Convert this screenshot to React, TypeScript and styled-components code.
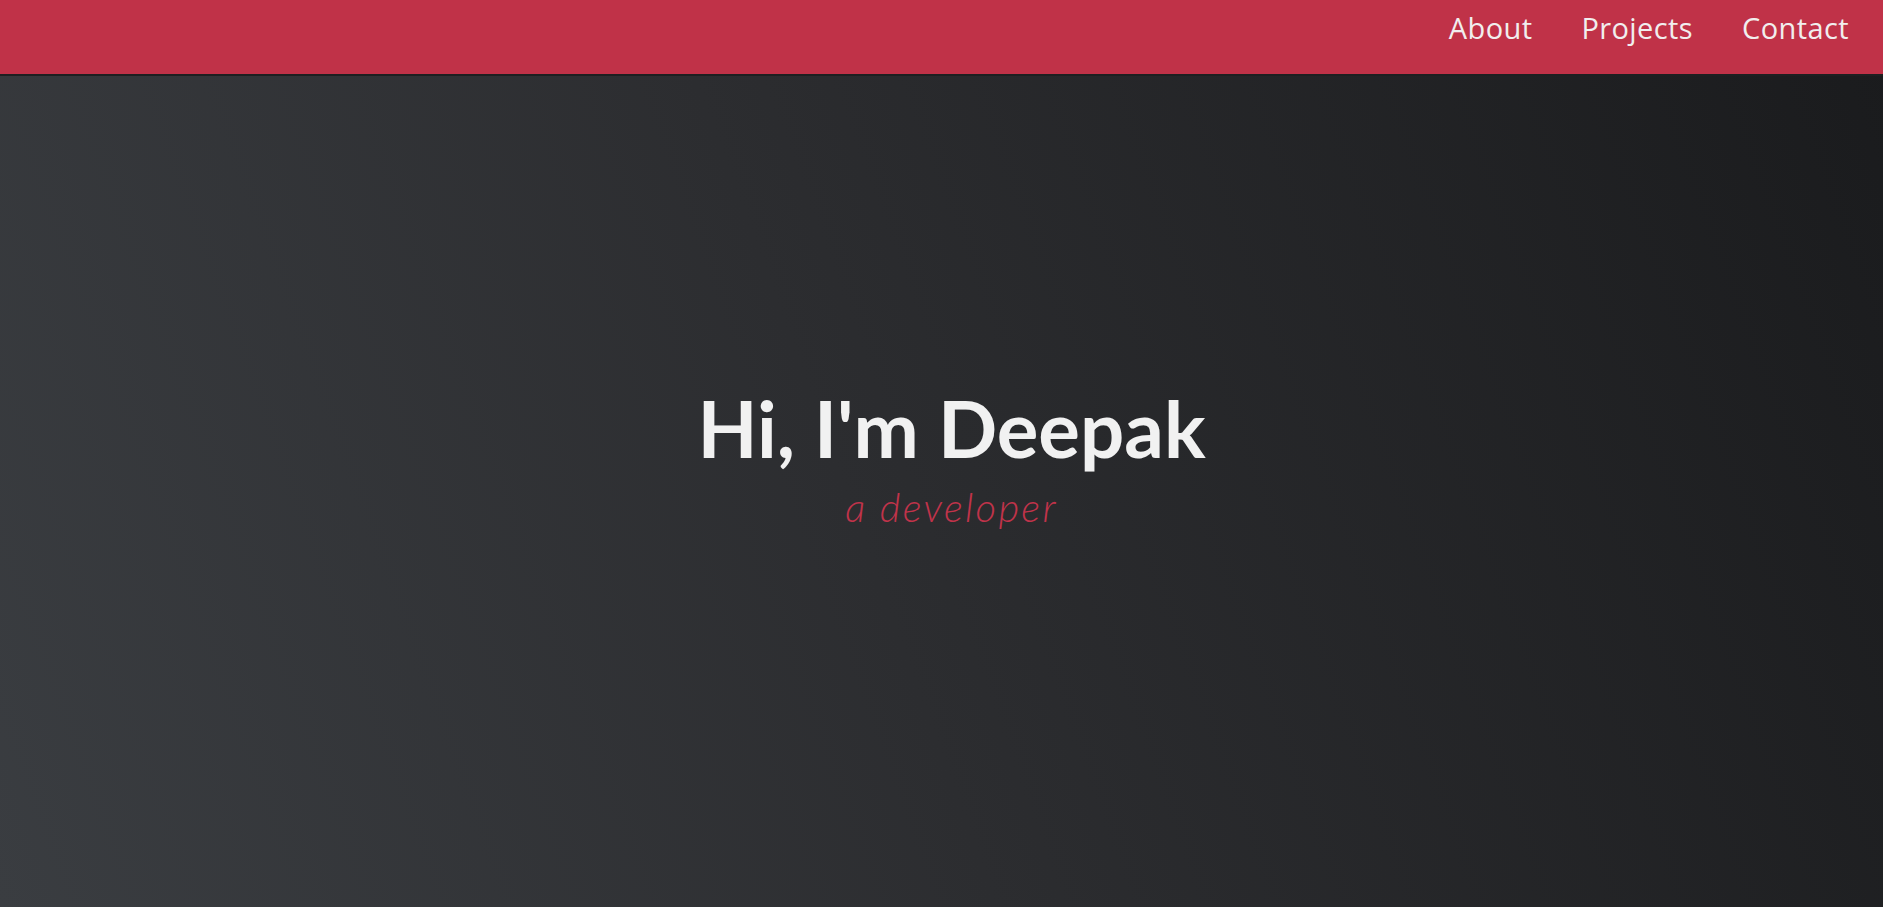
import React from 'react';
import styled, {createGlobalStyle} from 'styled-components';

const GlobalStyle = createGlobalStyle`
  html, body {
    margin: 0;
    padding: 0;
    height: 100%;
  }
  body {
    font-family: Lato, 'Open Sans', sans-serif;
    background: #1b1c1e;
    overflow: hidden;
  }
  #root {
    height: 100%;
  }
`;

const Page = styled.div`
  position: relative;
  height: 100vh;
  display: flex;
  flex-direction: column;
`;

const Header = styled.header`
  position: absolute;
  top: 0;
  left: 0;
  right: 0;
  height: 74px;
  background: #c03248;
  border-bottom: 2px solid #1e1f21;
  display: flex;
  justify-content: flex-end;
  align-items: flex-start;
  padding: 0 34px 0 0;
  z-index: 2;
`;

const Nav = styled.nav`
  display: flex;
  gap: 49px;
  padding-top: 10px;
`;

const NavLink = styled.a`
  font-family: 'Open Sans', Lato, sans-serif;
  font-size: 29px;
  letter-spacing: 0.4px;
  color: #f1eeee;
  text-decoration: none;
  line-height: 36px;
`;

const Hero = styled.section`
  flex: 1;
  display: flex;
  flex-direction: column;
  align-items: center;
  justify-content: center;
  background: linear-gradient(70deg, #3a3d41 0%, #2c2d30 45%, #1a1b1d 100%);
  padding: 10px 0 0 20px;
`;

const Title = styled.h1`
  font-family: Lato, 'Open Sans', sans-serif;
  font-weight: 700;
  font-size: 78px;
  line-height: 1.1;
  color: #f1f1f1;
  margin: 0;
`;

const Subtitle = styled.p`
  font-family: Lato, 'Open Sans', sans-serif;
  font-weight: 300;
  font-style: italic;
  font-size: 40px;
  letter-spacing: 2.3px;
  color: #c0334a;
  margin: 12px 0 0;
`;

export default function App() {
  return (
    <Page>
      <GlobalStyle />
      <Header>
        <Nav>
          <NavLink href="#about">About</NavLink>
          <NavLink href="#projects">Projects</NavLink>
          <NavLink href="#contact">Contact</NavLink>
        </Nav>
      </Header>
      <Hero>
        <Title>Hi, I'm Deepak</Title>
        <Subtitle>a developer</Subtitle>
      </Hero>
    </Page>
  );
}
